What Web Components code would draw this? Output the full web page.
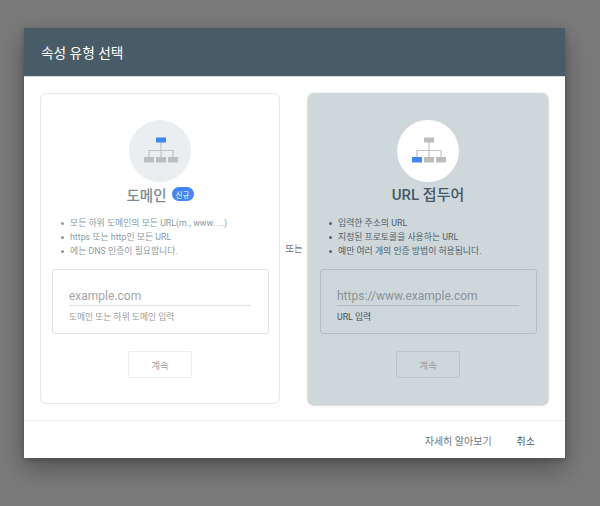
<!DOCTYPE html>
<html lang="ko">
<head>
<meta charset="utf-8">
<title>속성 유형 선택</title>
<style>
  html, body { margin: 0; height: 100%; }
  body {
    background: #7a7a7a;
    font-family: Roboto, "Noto Sans CJK KR", sans-serif;
    padding: 28px 35px 48px 24px;
    box-sizing: border-box;
    overflow: hidden;
  }
</style>
</head>
<body>
<type-dialog>
  <span slot="title">속성 유형 선택</span>
  <type-card>
    <site-icon slot="icon" active="top"></site-icon>
    <span slot="title">도메인</span>
    <span slot="badge">신규</span>
    <li>모든 하위 도메인의 모든 URL(m., www. ...)</li>
    <li>https 또는 http인 모든 URL</li>
    <li>에는 DNS 인증이 필요합니다.</li>
    <span slot="placeholder">example.com</span>
    <span slot="hint">도메인 또는 하위 도메인 입력</span>
  </type-card>
  <span slot="or">또는</span>
  <type-card selected>
    <site-icon slot="icon" active="left"></site-icon>
    <span slot="title">URL 접두어</span>
    <li>입력한 주소의 URL</li>
    <li>지정된 프로토콜을 사용하는 URL</li>
    <li>예만 여러 개의 인증 방법이 허용됩니다.</li>
    <span slot="placeholder">https://www.example.com</span>
    <span slot="hint">URL 입력</span>
  </type-card>
  <span slot="more">자세히 알아보기</span>
  <span slot="cancel">취소</span>
</type-dialog>

<script>
const dialogTemplate = document.createElement('template');
dialogTemplate.innerHTML = `
<style>
  :host {
    width: 541px;
    height: 430px;
    background: #fff;
    box-shadow: 0 10px 24px rgba(0,0,0,0.32), 0 2px 6px rgba(0,0,0,0.2);
    display: flex;
    flex-direction: column;
  }
  header {
    height: 48px;
    box-sizing: border-box;
    background: #485c67;
    color: #fff;
    font-size: 13.7px;
    display: flex;
    align-items: center;
    padding: 0 0 0 17px;
    flex: none;
  }
  .rule { height: 1px; background: #d7dcdf; flex: none; }
  .body {
    flex: 1;
    display: flex;
    align-items: stretch;
    padding: 16px;
  }
  .or {
    width: 28px;
    flex: none;
    display: flex;
    align-items: center;
    justify-content: center;
    padding-bottom: 2px;
    font-size: 9.5px;
    color: #70757a;
  }
  footer {
    height: 38px;
    border-top: 1px solid #eceeef;
    display: flex;
    align-items: center;
    justify-content: flex-end;
    gap: 25px;
    padding: 0 30px 0 0;
    font-size: 10px;
    flex: none;
  }
  .more { color: #70757a; }
  .cancel { color: #455a64; }
</style>
<header><slot name="title"></slot></header>
<div class="rule"></div>
<div class="body">
  <slot></slot>
  <div class="or"><slot name="or"></slot></div>
  <slot name="second"></slot>
</div>
<footer>
  <span class="more"><slot name="more"></slot></span>
  <span class="cancel"><slot name="cancel"></slot></span>
</footer>
`;

class TypeDialog extends HTMLElement {
  constructor() {
    super();
    this._shadowRoot = this.attachShadow({ mode: 'open' });
  }

  connectedCallback() {
    this._shadowRoot.appendChild(dialogTemplate.content.cloneNode(true));
    // the "or" label sits between the two cards
    const second = this.querySelectorAll('type-card')[1];
    if (second) second.slot = 'second';
  }
}

const cardTemplate = document.createElement('template');
cardTemplate.innerHTML = `
<style>
  :host {
    display: flex;
    flex-direction: column;
    align-items: center;
    width: 240px;
    height: 311px;
    box-sizing: border-box;
    border: 1px solid #e6e8ea;
    border-radius: 6px;
    background: #fff;
    padding: 26px 11px 0 11px;
    color: #8a9ba5;
  }
  :host([selected]) {
    background: #ced7da;
    border-color: #ced7da;
    box-shadow: 0 1px 3px rgba(0,0,0,0.3);
    color: #4f626c;
  }
  .title-row {
    display: flex;
    align-items: center;
    gap: 5px;
    height: 24px;
    font-size: 14.5px;
    font-weight: 500;
    color: #7a8b94;
  }
  :host([selected]) .title-row { color: #455a64; font-size: 15px; padding-bottom: 2px; box-sizing: border-box; }
  .badge {
    background: #4285f4;
    color: #fff;
    font-size: 7.5px;
    font-weight: 400;
    border-radius: 7px;
    height: 14px;
    width: 22px;
    display: flex;
    align-items: center;
    justify-content: center;
  }
  .badge.empty { display: none; }
  ul {
    align-self: stretch;
    list-style: none;
    margin: 10px 0 0 0;
    padding: 0 0 0 18px;
    font-size: 8.85px;
    line-height: 14px;
  }
  ::slotted(li)::before {
    content: '';
    display: inline-block;
    width: 3px;
    height: 3px;
    border-radius: 50%;
    background: currentColor;
    margin-left: -9px;
    margin-right: 6px;
    vertical-align: middle;
  }
  .field {
    align-self: stretch;
    box-sizing: border-box;
    height: 65px;
    margin: 11px -1px 0 0;
    border: 1px solid #e0e0e0;
    border-radius: 3px;
    padding: 18px 17px 0 16px;
  }
  :host([selected]) .field { border-color: #b4bfc4; }
  .placeholder {
    font-size: 12px;
    line-height: 16px;
    height: 17px;
    color: #a6a6a6;
    border-bottom: 1px solid #e0e0e0;
  }
  :host([selected]) .placeholder { color: #8a9398; border-color: #b4bfc4; }
  .hint {
    font-size: 8.75px;
    line-height: 10px;
    margin-top: 6px;
    color: #9a9a9a;
  }
  :host([selected]) .hint { color: #4a4f52; }
  .btn {
    width: 64px;
    height: 27px;
    box-sizing: border-box;
    margin-top: 17px;
    border: 1px solid #ececec;
    border-radius: 2px;
    font-size: 9.5px;
    color: #a0a0a0;
    display: flex;
    align-items: center;
    justify-content: center;
  }
  :host([selected]) .btn { border-color: #bcc6ca; color: #98a1a6; }
</style>
<slot name="icon"></slot>
<div class="title-row">
  <slot name="title"></slot>
  <span class="badge"><slot name="badge"></slot></span>
</div>
<ul><slot></slot></ul>
<div class="field">
  <div class="placeholder"><slot name="placeholder"></slot></div>
  <div class="hint"><slot name="hint"></slot></div>
</div>
<div class="btn">계속</div>
`;

class TypeCard extends HTMLElement {
  constructor() {
    super();
    this._shadowRoot = this.attachShadow({ mode: 'open' });
  }

  connectedCallback() {
    this._shadowRoot.appendChild(cardTemplate.content.cloneNode(true));
    if (!this.querySelector('[slot="badge"]')) {
      this._shadowRoot.querySelector('.badge').classList.add('empty');
    }
  }
}

const iconTemplate = document.createElement('template');
iconTemplate.innerHTML = `
<style>
  :host {
    display: flex;
    width: 62px;
    height: 62px;
    border-radius: 50%;
    background: #ebeef0;
    align-items: center;
    justify-content: center;
    flex: none;
  }
  :host([active="left"]) { background: #fff; }
  svg { display: block; margin-left: 1px; }
</style>
<svg width="34" height="28" viewBox="0 0 34 28">
  <path d="M17 5v15M5 20v-6.5h24v6.5" fill="none" stroke="#c4c4c4" stroke-width="1.2"/>
  <rect class="top" x="12" y="0.5" width="10" height="5" fill="#bdbdbd"/>
  <rect class="left" x="0" y="20" width="10" height="5.5" fill="#bdbdbd"/>
  <rect x="12" y="20" width="10" height="5.5" fill="#bdbdbd"/>
  <rect x="24" y="20" width="10" height="5.5" fill="#bdbdbd"/>
</svg>
`;

class SiteIcon extends HTMLElement {
  constructor() {
    super();
    this._shadowRoot = this.attachShadow({ mode: 'open' });
  }

  connectedCallback() {
    this._shadowRoot.appendChild(iconTemplate.content.cloneNode(true));
    const part = this._shadowRoot.querySelector('.' + this.getAttribute('active'));
    if (part) part.setAttribute('fill', '#4285f4');
  }
}

customElements.define('site-icon', SiteIcon);
customElements.define('type-card', TypeCard);
customElements.define('type-dialog', TypeDialog);
</script>
</body>
</html>
